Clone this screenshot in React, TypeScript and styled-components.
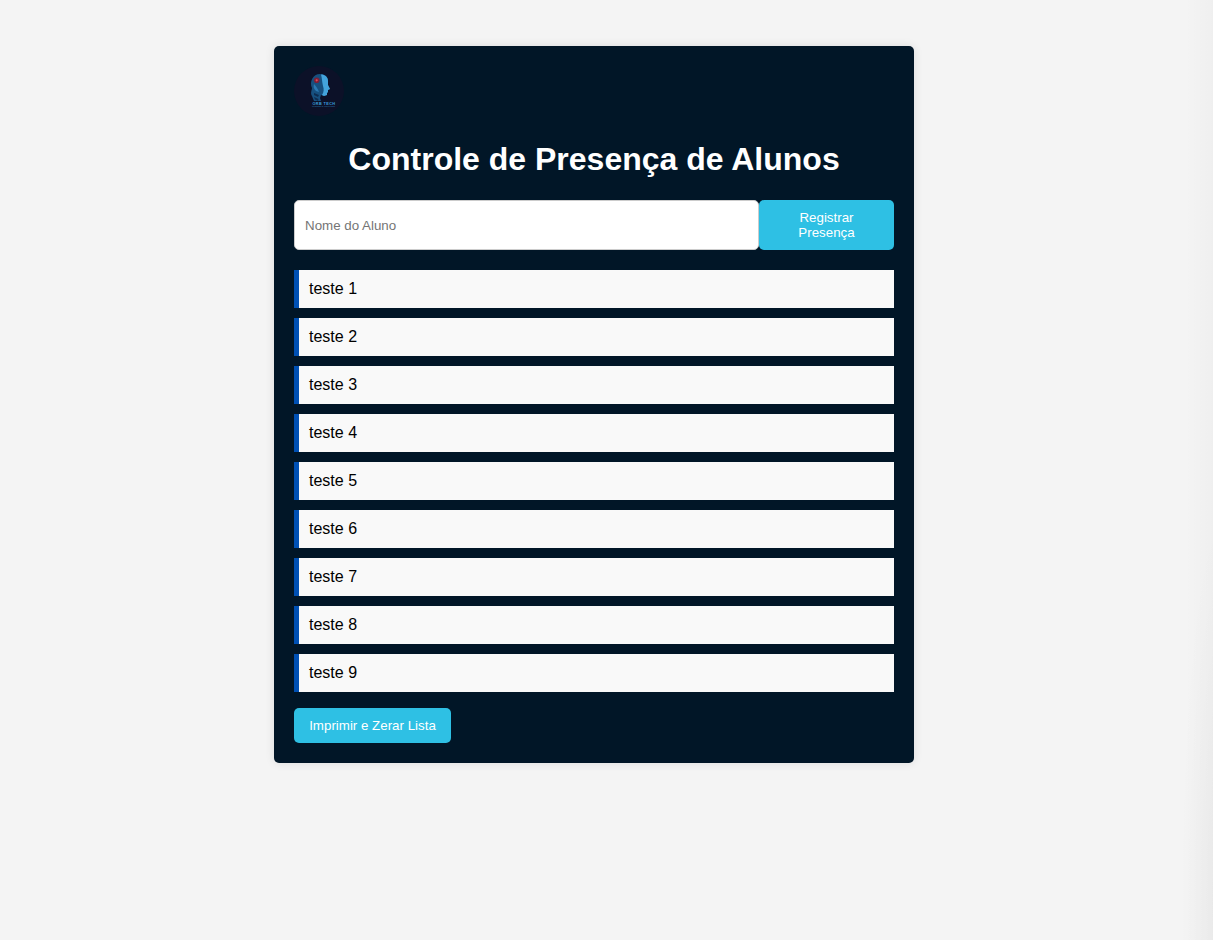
import React from 'react';
import styled, { createGlobalStyle } from 'styled-components';

const GlobalStyle = createGlobalStyle`
  html, body {
    margin: 0;
    padding: 0;
  }
  body {
    background: #f4f4f4;
    font-family: "Liberation Sans", Arial, sans-serif;
  }
`;

const Page = styled.div`
  min-height: 940px;
  display: flex;
  justify-content: center;
  align-items: flex-start;
  padding: 46px 25px 0 0;
  box-sizing: border-box;
  background:
    linear-gradient(to right, rgba(0, 0, 0, 0) 1185px, rgba(0, 0, 0, 0.018) 1213px),
    radial-gradient(45px 400px at 1225px 900px, rgba(0, 0, 0, 0.03), rgba(0, 0, 0, 0));
`;

const Card = styled.main`
  width: 640px;
  box-sizing: border-box;
  padding: 20px;
  background: #011627;
  border-radius: 5px;
  box-shadow: 0 0 10px rgba(0, 0, 0, 0.1);
`;

const LogoMark = styled.svg`
  display: block;
  width: 50px;
  height: 50px;
`;

const Title = styled.h1`
  margin: 25px 0 22px;
  font-size: 32px;
  font-weight: 700;
  line-height: 37px;
  text-align: center;
  color: #ffffff;
`;

const Form = styled.form`
  display: flex;
  height: 50px;
  margin-bottom: 20px;
`;

const NameInput = styled.input`
  flex: 1;
  min-width: 0;
  box-sizing: border-box;
  padding: 10px;
  border: 1px solid #cccccc;
  border-radius: 5px;
  background: #ffffff;
  font-family: inherit;
  font-size: 13.33px;
  color: #000000;

  &::placeholder {
    color: #757575;
  }
`;

const ActionButton = styled.button<{ $wide?: boolean }>`
  display: block;
  box-sizing: border-box;
  width: ${({ $wide }) => ($wide ? '157px' : '135px')};
  height: ${({ $wide }) => ($wide ? '35px' : '50px')};
  padding: ${({ $wide }) => ($wide ? '10px 0' : '10px 15px')};
  border: 0;
  border-radius: 5px;
  background: #2ec0e4;
  font-family: inherit;
  font-size: 13.33px;
  line-height: 15px;
  color: #ffffff;
  text-align: center;
  white-space: ${({ $wide }) => ($wide ? 'nowrap' : 'normal')};
  cursor: pointer;
`;

const StudentList = styled.ul`
  list-style: none;
  margin: 0 0 16px;
  padding: 0;
`;

const StudentRow = styled.li`
  height: 38px;
  box-sizing: border-box;
  margin-bottom: 10px;
  padding: 10px;
  border-left: 5px solid #0050b3;
  background: #f9f9f9;
  font-size: 16px;
  line-height: 18px;
  color: #000000;

  &:last-child {
    margin-bottom: 0;
  }
`;

const students = ['teste 1', 'teste 2', 'teste 3', 'teste 4', 'teste 5', 'teste 6', 'teste 7', 'teste 8', 'teste 9'];

// round badge: robot head in profile, looking right, with the brand name below
const Logo = () => (
  <LogoMark viewBox="0 0 50 50" aria-label="Orb Tech">
    <circle cx="25" cy="25" r="25" fill="#0c1128" />
    <path d="M20 35L18 30C16 27 18 24 18 22C15 16 19 8 26 8C31 8 34 11 34 15L34 19L36 23L34 24L34 26L33 27L33 29L30 30L27 29L26 32L27 35Z" fill="#17507f" />
    <path d="M27 8.500C31 8.500 34 11 34 15L34 19L36 23L34 24L34 26L33 27L33 29L30 30L28 29C30 26 30 23 29 20C28 16 28 12 27 8.500Z" fill="#43a4dc" />
    <path d="M20 18C22 20 24 23 25 26L22 25C20 23 19 21 20 18Z" fill="#2b79b4" />
    <path d="M20 27L25 29L24 31L20 29ZM20 31L24.500 33L24 35L21 33.500Z" fill="#0e2c50" />
    <circle cx="22.7" cy="14.300" r="2.800" fill="#7d2038" />
    <circle cx="22.7" cy="14.300" r="1.100" fill="#e04a58" />
    <text x="30" y="38.500" textAnchor="middle" fontFamily="Liberation Sans" fontSize="3.800" fontWeight="700" letterSpacing="0.400" fill="#3a9fdc">ORB TECH</text>
    <text x="29.500" y="41.300" textAnchor="middle" fontFamily="Liberation Sans" fontSize="1.800" letterSpacing="0.100" fill="#2a78ad">INTERNET E SOLUÇÕES</text>
  </LogoMark>
);

export default function App() {
  return (
    <>
      <GlobalStyle />
      <Page>
        <Card>
          <Logo />
          <Title>Controle de Presença de Alunos</Title>
          <Form onSubmit={(e) => e.preventDefault()}>
            <NameInput type="text" placeholder="Nome do Aluno" />
            <ActionButton type="submit">Registrar Presença</ActionButton>
          </Form>
          <StudentList>
            {students.map((name) => (
              <StudentRow key={name}>{name}</StudentRow>
            ))}
          </StudentList>
          <ActionButton type="button" $wide>Imprimir e Zerar Lista</ActionButton>
        </Card>
      </Page>
    </>
  );
}
